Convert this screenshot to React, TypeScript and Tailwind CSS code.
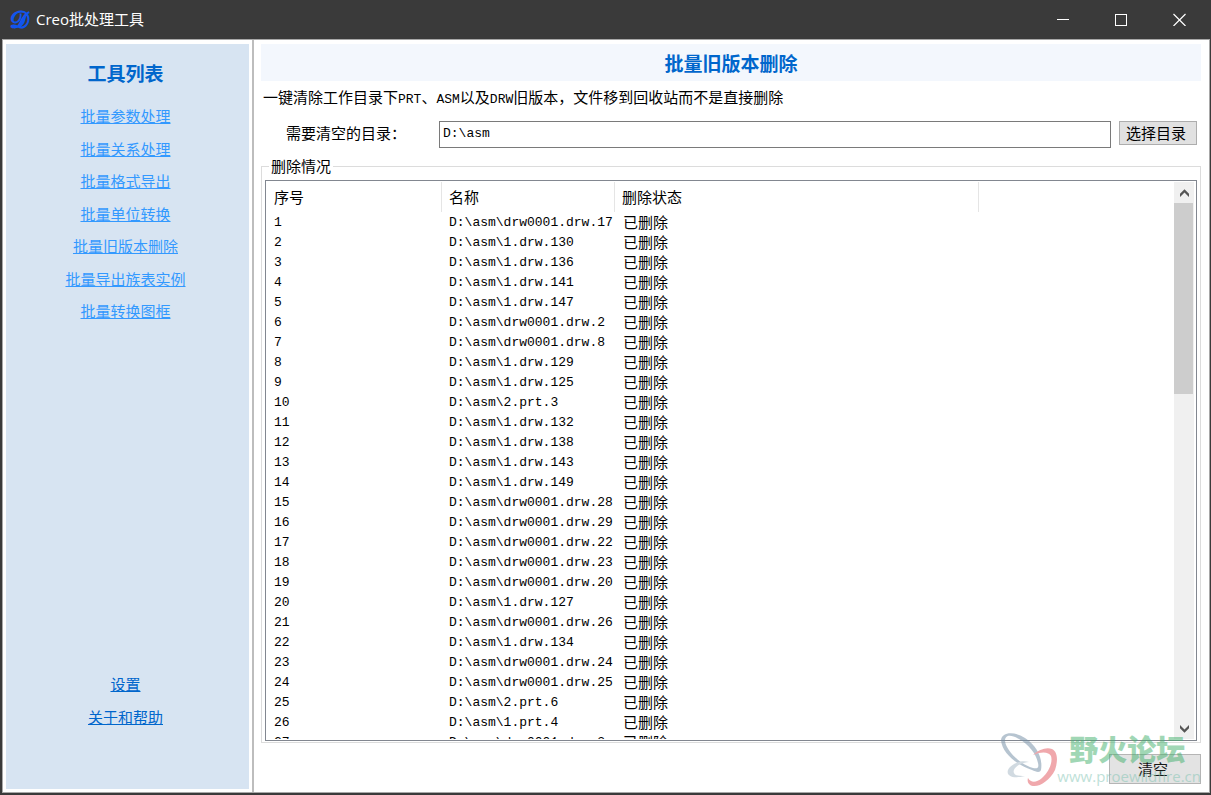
import { useState } from "react";

const tools = [
  "批量参数处理",
  "批量关系处理",
  "批量格式导出",
  "批量单位转换",
  "批量旧版本删除",
  "批量导出族表实例",
  "批量转换图框",
];

const files = [
  "drw0001.drw.17",
  "1.drw.130",
  "1.drw.136",
  "1.drw.141",
  "1.drw.147",
  "drw0001.drw.2",
  "drw0001.drw.8",
  "1.drw.129",
  "1.drw.125",
  "2.prt.3",
  "1.drw.132",
  "1.drw.138",
  "1.drw.143",
  "1.drw.149",
  "drw0001.drw.28",
  "drw0001.drw.29",
  "drw0001.drw.22",
  "drw0001.drw.23",
  "drw0001.drw.20",
  "1.drw.127",
  "drw0001.drw.26",
  "1.drw.134",
  "drw0001.drw.24",
  "drw0001.drw.25",
  "2.prt.6",
  "1.prt.4",
  "drw0001.drw.3",
];

const Latin = ({ children }: { children: string }) => (
  <span className="font-['Liberation_Mono',monospace] text-[13px] leading-none">
    {children}
  </span>
);

const TitleBar = () => (
  <header className="flex h-[39px] shrink-0 items-center bg-[#3a3a3a] text-white">
    <span className="w-9 pl-2.5 font-['DejaVu_Sans','DejaVu_Serif',serif] text-[24px] font-bold leading-7 text-[#1155ee]">
      𝓓
    </span>
    <h1 className="flex-1 font-['Open_Sans','Noto_Sans_CJK_SC',sans-serif] text-[15px]">
      Creo批处理工具
    </h1>
    <div className="flex h-full pr-[3px]">
      <button type="button" aria-label="最小化" className="flex w-[58px] items-center justify-center">
        <svg width="13" height="13" viewBox="0 0 13 13" stroke="white" shapeRendering="crispEdges">
          <path d="M0 6.5h12" />
        </svg>
      </button>
      <button type="button" aria-label="最大化" className="flex w-[58px] items-center justify-center">
        <svg width="13" height="13" viewBox="0 0 13 13" stroke="white" fill="none" shapeRendering="crispEdges">
          <path d="M.5 1.500h11v11h-11z" />
        </svg>
      </button>
      <button type="button" aria-label="关闭" className="flex w-[58px] items-center justify-center">
        <svg width="13" height="13" viewBox="0 0 13 13" stroke="white" strokeWidth="1.2">
          <path d="M.5 1l12 12M12.5 1l-12 12" />
        </svg>
      </button>
    </div>
  </header>
);

const Sidebar = () => (
  <aside className="w-[251px] shrink-0 border-r-2 border-[#bdbdbd] px-[3px] pb-[3px] pt-1">
    <div className="flex h-full flex-col items-center bg-[#d7e4f2] pb-[62px] pr-1 pt-[15px]">
      <h2 className="text-[19px] font-bold leading-7 text-[#0066cc]">工具列表</h2>
      <nav className="flex flex-1 flex-col justify-between pt-[19px]">
        <ul className="flex h-[215px] flex-col items-center justify-between">
          {tools.map((tool) => (
            <li key={tool} className="leading-5">
              <a href="#" className="text-[#3399ff] underline underline-offset-1">
                {tool}
              </a>
            </li>
          ))}
        </ul>
        <ul className="flex flex-col items-center gap-[13px]">
          {["设置", "关于和帮助"].map((item) => (
            <li key={item} className="leading-5">
              <a href="#" className="text-[#0066cc] underline underline-offset-1">
                {item}
              </a>
            </li>
          ))}
        </ul>
      </nav>
    </div>
  </aside>
);

const Arrow = ({ down }: { down?: boolean }) => (
  <svg width="11" height="8" viewBox="0 0 11 8" fill="#555">
    <path d={down ? "M1 0v3.2l4.5 4.5L10 3.2V0L5.500 4.400z" : "M1 8V4.800L5.500 .3 10 4.800V8L5.500 3.600z"} />
  </svg>
);

const ScrollBar = () => (
  <div className="mr-0.5 flex w-5 shrink-0 flex-col bg-[#f0f0f0]">
    <button type="button" aria-label="向上滚动" className="flex h-[21px] items-center justify-center">
      <Arrow />
    </button>
    <div className="flex-1">
      <div className="mr-px h-[191px] bg-[#cdcdcd]" />
    </div>
    <button type="button" aria-label="向下滚动" className="flex h-[21px] items-center justify-center">
      <Arrow down />
    </button>
  </div>
);

const FileTable = () => (
  <div className="flex min-h-0 flex-1 border border-[#828790] pt-px pb-px">
    <div className="min-w-0 flex-1 overflow-hidden">
      <table className="w-full table-fixed border-separate border-spacing-0 text-left">
        <colgroup>
          <col className="w-[176px]" />
          <col className="w-[173px]" />
          <col className="w-[364px]" />
          <col />
        </colgroup>
        <thead>
          <tr className="h-[30px]">
            <th className="border-r border-[#e5e5e5] p-0 pl-2 font-normal">序号</th>
            <th className="border-r border-[#e5e5e5] p-0 pl-[7px] font-normal">名称</th>
            <th className="border-r border-[#e5e5e5] p-0 pl-[7px] font-normal">删除状态</th>
            <th className="p-0" />
          </tr>
        </thead>
        <tbody>
          {files.map((file, i) => (
            <tr key={file} className="h-5 leading-5">
              <td className="p-0 pl-2 pt-0.5 font-['Liberation_Mono',monospace] text-[13px] leading-[18px]">
                {i + 1}
              </td>
              <td className="whitespace-nowrap p-0 pl-[7px] pt-0.5 font-['Liberation_Mono',monospace] text-[13px] leading-[18px]">
                {"D:\\asm\\" + file}
              </td>
              <td className="p-0 pl-2">已删除</td>
              <td className="p-0" />
            </tr>
          ))}
        </tbody>
      </table>
    </div>
    <ScrollBar />
  </div>
);

const Watermark = () => (
  <div className="pointer-events-none absolute bottom-1 right-2 flex items-end opacity-50">
    <svg width="58" height="56" viewBox="0 0 58 56" fill="none" className="mr-0.5">
      <path
        fill="#6f8aa3"
        fillRule="evenodd"
        d="M0 8C1 0 13-1 24 6c12 8 18 20 16 32-1 3-5 2-9 0C18 34 1 22 0 8zM4 9c1 9 14 23 28 27 5 1 6-1 5-5C35 21 27 12 18 7 11 3 4 2 4 9z"
      />
      <path
        fill="#e2545c"
        d="M32 23C38 17 46 15 51 17c6 3 6 12 3 21C49 48 39 55 32 54c-5-1-6-5-5-8 3 5 8 5 14 0 7-6 11-16 9-22-2-4-9-5-18-1z"
      />
      <path
        fill="#a5b7c4"
        d="M28 30C19 27 9 33 7 38c-2 6 5 9 17 6-5 0-10 0-11-3-2-4 4-10 15-11z"
      />
    </svg>
    <div className="-ml-1 flex flex-col items-start">
      <span className="pl-3 text-[29px] font-black leading-8 text-[#44b06d]">野火论坛</span>
      <span className="font-['Open_Sans',sans-serif] text-[15px] leading-6 text-[#7fc4b2]">
        www.proewildfire.cn
      </span>
    </div>
  </div>
);

const App = () => {
  const [folder, setFolder] = useState("D:\\asm");

  return (
    <div className="flex h-screen flex-col bg-[#3a3a3a] pb-0.5 font-['Noto_Sans_CJK_SC',sans-serif] text-[15px] text-black">
      <TitleBar />
      <div className="relative ml-0.5 mr-px flex min-h-0 flex-1 border border-[#a8a8a8] bg-white">
        <Sidebar />
        <main className="flex min-w-0 flex-1 flex-col pb-2 pl-[7px] pr-2 pt-1">
          <h2 className="bg-[#f3f7fd] text-center text-[19px] font-bold leading-[37px] text-[#0066cc]">
            批量旧版本删除
          </h2>
          <p className="pl-0.5 pt-1.5 leading-5">
            一键清除工作目录下<Latin>PRT</Latin>、<Latin>ASM</Latin>以及<Latin>DRW</Latin>
            旧版本，文件移到回收站而不是直接删除
          </p>
          <div className="mt-[14px] flex items-start pl-[25px] pr-1">
            <label htmlFor="folder" className="w-[153px] leading-6">
              需要清空的目录：
            </label>
            <input
              id="folder"
              type="text"
              value={folder}
              onChange={(e) => setFolder(e.target.value)}
              className="h-[27px] min-w-0 flex-1 border border-[#7a7a7a] px-[3px] pb-0.5 font-['Liberation_Mono',monospace] text-[13px]"
            />
            <button
              type="button"
              className="ml-2 h-6 w-[78px] border border-[#adadad] bg-[#e1e1e1] pr-1 leading-5"
            >
              选择目录
            </button>
          </div>
          <fieldset className="mt-2 flex min-h-0 min-w-0 flex-1 flex-col border border-[#dcdcdc] px-[3px] pb-px">
            <legend className="ml-1 px-0.5 leading-5">删除情况</legend>
            <div className="flex h-full min-h-0 flex-col pt-1">
              <FileTable />
            </div>
          </fieldset>
          <div className="flex justify-end pt-[11px]">
            <button
              type="button"
              className="h-[30px] w-[92px] border border-[#adadad] bg-[#e1e1e1] pr-1 opacity-90"
            >
              清空
            </button>
          </div>
        </main>
        <Watermark />
      </div>
    </div>
  );
};

export default App;
